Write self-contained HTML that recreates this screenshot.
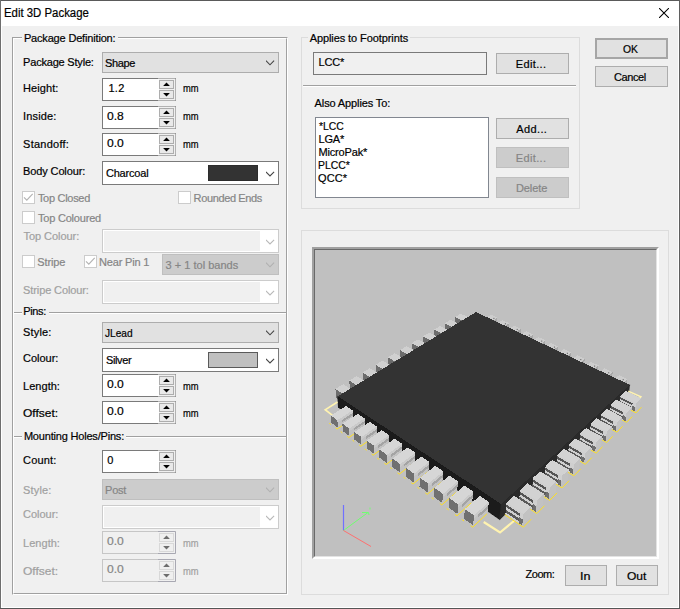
<!DOCTYPE html>
<html>
<head>
<meta charset="utf-8">
<title>Edit 3D Package</title>
<style>
html,body{margin:0;padding:0;}
body{width:680px;height:609px;overflow:hidden;background:#f0f0f0;font-family:"Liberation Sans",sans-serif;font-size:11px;color:#000;position:relative;}
.a{position:absolute;}
#bt{left:0;top:0;width:680px;height:1px;background:#5a5a5a;}
#bl{left:0;top:0;width:1px;height:609px;background:#6e6e6e;}
#br{left:678px;top:1px;width:1px;height:607px;background:#fff;}
#br2{left:679px;top:0;width:1px;height:609px;background:#5f5f5f;}
#bb{left:1px;top:607px;width:678px;height:1px;background:#fff;}
#bb2{left:0;top:608px;width:680px;height:1px;background:#555;}
#title{left:1px;top:1px;width:678px;height:25px;background:#fff;}
.t{position:absolute;white-space:nowrap;line-height:13px;height:13px;font-size:11px;-webkit-text-stroke:0.2px currentColor;}
.d{color:#858585;}
.dl{color:#a0a0a0;}
.e{position:absolute;box-sizing:border-box;border-top:1px solid #a0a0a0;border-left:1px solid #a0a0a0;border-right:1px solid #fff;border-bottom:1px solid #fff;}
.e i{position:absolute;left:0;top:0;right:0;bottom:0;border-top:1px solid #fff;border-left:1px solid #fff;border-right:1px solid #a0a0a0;border-bottom:1px solid #a0a0a0;}
.hl{position:absolute;height:1px;background:#a0a0a0;border-bottom:1px solid #fff;}
.gb{position:absolute;border:1px solid #dcdcdc;box-sizing:border-box;}
.gl{position:absolute;background:#f0f0f0;white-space:nowrap;line-height:13px;height:13px;}
.gl .t{position:relative;display:inline-block;}
.cb{position:absolute;box-sizing:border-box;border:1px solid #adadad;background:#e1e1e1;height:21px;}
.cb.w{background:#fff;border-color:#7a7a7a;}
.cb.dis{background:#cccccc;border-color:#bfbfbf;}
.cb.wd{background:#fff;border-color:#cccccc;}
.cb.wd b{position:absolute;left:1px;top:1px;width:156px;height:20px;background:#f0f0f0;}
.cb svg{position:absolute;}
.sp{position:absolute;box-sizing:border-box;border:1px solid #7a7a7a;border-right-color:#b2b2b2;background:#fff;width:74px;height:23px;}
.sp u{position:absolute;left:55px;top:-1px;width:17px;height:21px;border-top:1px solid #b2b2b2;border-bottom:1px solid #b2b2b2;background:#f0f0f0;box-shadow:inset 1px 0 0 #fff;}
.sp.dis{border-color:#c6c6c6;border-right-color:#a8a8b2;background:#f0f0f0;}
.sp.dis u{border-color:#a8a8b2;box-shadow:none;}
.sb{position:absolute;box-sizing:border-box;border:1px solid #adadad;background:#e9e9e9;width:15px;height:9px;left:56px;}
.sb svg{position:absolute;left:0;top:0;}
.sp.dis .sb{border-color:#d8d8d8;background:#efefef;}
.btn{position:absolute;box-sizing:border-box;border:1px solid #adadad;background:#e1e1e1;height:21px;}
.btn.dis{background:#cccccc;border-color:#bfbfbf;}
.btn.def{border:2px solid #a6a6a6;}
.ck{position:absolute;box-sizing:border-box;border:1px solid #cccccc;background:#fff;width:13px;height:13px;}
.ck.off{background:#f4f4f4;}
</style>
</head>
<body>
<div class="a" id="bt"></div><div class="a" id="bl"></div><div class="a" style="left:1px;top:1px;width:1px;height:606px;background:#fff"></div><div class="a" id="br"></div><div class="a" id="br2"></div><div class="a" id="bb"></div><div class="a" id="bb2"></div>
<div class="a" id="title"></div>
<div class="t" style="left:4.1px;top:7.2px;transform:scaleX(0.926);transform-origin:0 0;font-size:12.3px">Edit 3D Package</div>
<svg class="a" style="left:659px;top:8px" width="10" height="10" viewBox="0 0 10 10"><path d="M0 0L10 10M10 0L0 10" stroke="#000" stroke-width="1.05" fill="none"/></svg>
<div class="e" style="left:12px;top:37px;width:276px;height:558px"><i></i></div>
<div class="hl" style="left:14px;top:312px;width:272px"></div>
<div class="hl" style="left:14px;top:436px;width:272px"></div>
<div class="gl" style="left:22px;top:31px;width:96px"></div>
<div class="gl" style="left:22px;top:305px;width:27px"></div>
<div class="gl" style="left:22px;top:430px;width:104px"></div>
<div class="t" style="left:23.9px;top:31.7px;letter-spacing:-0.17px">Package Definition:</div>
<div class="t" style="left:23.3px;top:304.7px;letter-spacing:-0.37px">Pins:</div>
<div class="t" style="left:23.9px;top:429.7px;letter-spacing:-0.19px">Mounting Holes/Pins:</div>
<div class="t" style="left:23.1px;top:55.7px;letter-spacing:-0.20px">Package Style:</div>
<div class="cb " style="left:102px;top:52px;width:177px;height:21px"><svg style="right:3px;top:7px" width="9" height="6" viewBox="0 0 9 6"><path d="M-0.1 0.65L4 4.8L8.1 0.65" stroke="#444" stroke-width="1.1" fill="none"/></svg></div>

<div class="t" style="left:105.1px;top:56.7px;letter-spacing:-0.40px">Shape</div>
<div class="t" style="left:23.1px;top:81.7px;letter-spacing:0.06px">Height:</div>
<div class="sp" style="left:102px;top:78px"><u></u><div class="sb" style="top:1px"><svg width="13" height="7" viewBox="0 0 13 7"><polygon points="3.1,5 6.5,1.5 9.9,5" fill="#000"/></svg></div><div class="sb" style="top:11px"><svg width="13" height="7" viewBox="0 0 13 7"><polygon points="3.1,2 9.9,2 6.5,5.5" fill="#000"/></svg></div></div>

<div class="t" style="left:108.5px;top:81.7px;letter-spacing:0.25px">1.2</div>
<div class="t" style="left:182.6px;top:81.7px;transform:scaleX(0.851);transform-origin:0 0">mm</div>
<div class="t" style="left:23.1px;top:109.7px;letter-spacing:0.13px">Inside:</div>
<div class="sp" style="left:102px;top:106px"><u></u><div class="sb" style="top:1px"><svg width="13" height="7" viewBox="0 0 13 7"><polygon points="3.1,5 6.5,1.5 9.9,5" fill="#000"/></svg></div><div class="sb" style="top:11px"><svg width="13" height="7" viewBox="0 0 13 7"><polygon points="3.1,2 9.9,2 6.5,5.5" fill="#000"/></svg></div></div>

<div class="t" style="left:107.1px;top:109.7px;transform:scaleX(1.098);transform-origin:0 0">0.8</div>
<div class="t" style="left:182.6px;top:109.7px;transform:scaleX(0.851);transform-origin:0 0">mm</div>
<div class="t" style="left:23.1px;top:137.7px;letter-spacing:0.24px">Standoff:</div>
<div class="sp" style="left:102px;top:133px"><u></u><div class="sb" style="top:1px"><svg width="13" height="7" viewBox="0 0 13 7"><polygon points="3.1,5 6.5,1.5 9.9,5" fill="#000"/></svg></div><div class="sb" style="top:11px"><svg width="13" height="7" viewBox="0 0 13 7"><polygon points="3.1,2 9.9,2 6.5,5.5" fill="#000"/></svg></div></div>

<div class="t" style="left:107.1px;top:136.7px;transform:scaleX(1.098);transform-origin:0 0">0.0</div>
<div class="t" style="left:182.6px;top:137.7px;transform:scaleX(0.851);transform-origin:0 0">mm</div>
<div class="t" style="left:23.1px;top:164.7px;letter-spacing:-0.13px">Body Colour:</div>
<div class="cb w" style="left:102px;top:161px;width:177px;height:24px"><div class="a" style="left:105px;top:3px;width:50px;height:16px;background:#333;box-shadow:inset 0 0 0 1px #2c2c2c"></div><svg style="right:3px;top:9px" width="9" height="6" viewBox="0 0 9 6"><path d="M-0.1 0.8L4 4.9L8.1 0.8" stroke="#444" stroke-width="1.1" fill="none"/></svg></div>

<div class="t" style="left:105.9px;top:166.7px;letter-spacing:-0.18px">Charcoal</div>
<div class="ck " style="left:22px;top:191px"><svg class="a" style="left:0;top:0" width="11" height="11" viewBox="0 0 11 11"><path d="M1 5.3L3.8 8.1L9.7 1.9" stroke="#b4b4b4" stroke-width="1.2" fill="none"/></svg></div>

<div class="t d" style="left:37.9px;top:191.7px;letter-spacing:-0.29px">Top Closed</div>
<div class="ck " style="left:178px;top:191px"></div>

<div class="t d" style="left:193.6px;top:191.7px;letter-spacing:-0.37px">Rounded Ends</div>
<div class="ck " style="left:22px;top:211px"></div>

<div class="t d" style="left:37.9px;top:211.7px;letter-spacing:-0.19px">Top Coloured</div>
<div class="t dl" style="left:23.5px;top:229.7px;letter-spacing:-0.05px">Top Colour:</div>
<div class="cb wd" style="left:102px;top:229px;width:177px;height:24px"><b></b><svg style="right:3px;top:9px" width="9" height="6" viewBox="0 0 9 6"><path d="M-0.1 0.8L4 4.9L8.1 0.8" stroke="#b8b8b8" stroke-width="1.1" fill="none"/></svg></div>

<div class="ck " style="left:22px;top:255px"></div>

<div class="t d" style="left:37.3px;top:255.7px;letter-spacing:-0.15px">Stripe</div>
<div class="ck " style="left:84px;top:255px"><svg class="a" style="left:0;top:0" width="11" height="11" viewBox="0 0 11 11"><path d="M1 5.3L3.8 8.1L9.7 1.9" stroke="#b4b4b4" stroke-width="1.2" fill="none"/></svg></div>

<div class="t d" style="left:99.1px;top:255.7px;letter-spacing:-0.19px">Near Pin 1</div>
<div class="cb dis" style="left:162px;top:254px;width:117px;height:21px"><svg style="right:3px;top:7px" width="9" height="6" viewBox="0 0 9 6"><path d="M-0.1 0.65L4 4.8L8.1 0.65" stroke="#b0b0b0" stroke-width="1.1" fill="none"/></svg></div>

<div class="t d" style="left:165.5px;top:258.7px;letter-spacing:0.02px">3 + 1 tol bands</div>
<div class="t dl" style="left:23.1px;top:283.7px;letter-spacing:-0.11px">Stripe Colour:</div>
<div class="cb wd" style="left:102px;top:280px;width:177px;height:24px"><b></b><svg style="right:3px;top:9px" width="9" height="6" viewBox="0 0 9 6"><path d="M-0.1 0.8L4 4.9L8.1 0.8" stroke="#b8b8b8" stroke-width="1.1" fill="none"/></svg></div>

<div class="t" style="left:23.1px;top:325.7px;letter-spacing:0.14px">Style:</div>
<div class="cb " style="left:102px;top:322px;width:177px;height:21px"><svg style="right:3px;top:7px" width="9" height="6" viewBox="0 0 9 6"><path d="M-0.1 0.65L4 4.8L8.1 0.65" stroke="#444" stroke-width="1.1" fill="none"/></svg></div>

<div class="t" style="left:105.1px;top:326.7px;transform:scaleX(0.920);transform-origin:0 0">JLead</div>
<div class="t" style="left:23.1px;top:351.7px;letter-spacing:-0.04px">Colour:</div>
<div class="cb w" style="left:102px;top:348px;width:177px;height:24px"><div class="a" style="left:105px;top:3px;width:48px;height:14px;background:#c0c0c0;border:1px solid #5a5a5a"></div><svg style="right:3px;top:9px" width="9" height="6" viewBox="0 0 9 6"><path d="M-0.1 0.8L4 4.9L8.1 0.8" stroke="#444" stroke-width="1.1" fill="none"/></svg></div>

<div class="t" style="left:105.9px;top:353.7px;letter-spacing:-0.34px">Silver</div>
<div class="t" style="left:23.1px;top:379.7px;letter-spacing:0.02px">Length:</div>
<div class="sp" style="left:102px;top:374px"><u></u><div class="sb" style="top:1px"><svg width="13" height="7" viewBox="0 0 13 7"><polygon points="3.1,5 6.5,1.5 9.9,5" fill="#000"/></svg></div><div class="sb" style="top:11px"><svg width="13" height="7" viewBox="0 0 13 7"><polygon points="3.1,2 9.9,2 6.5,5.5" fill="#000"/></svg></div></div>

<div class="t" style="left:107.1px;top:377.7px;transform:scaleX(1.098);transform-origin:0 0">0.0</div>
<div class="t" style="left:182.6px;top:379.7px;transform:scaleX(0.851);transform-origin:0 0">mm</div>
<div class="t" style="left:23.1px;top:406.7px;transform:scaleX(1.093);transform-origin:0 0">Offset:</div>
<div class="sp" style="left:102px;top:401px"><u></u><div class="sb" style="top:1px"><svg width="13" height="7" viewBox="0 0 13 7"><polygon points="3.1,5 6.5,1.5 9.9,5" fill="#000"/></svg></div><div class="sb" style="top:11px"><svg width="13" height="7" viewBox="0 0 13 7"><polygon points="3.1,2 9.9,2 6.5,5.5" fill="#000"/></svg></div></div>

<div class="t" style="left:107.1px;top:404.7px;transform:scaleX(1.098);transform-origin:0 0">0.0</div>
<div class="t" style="left:182.6px;top:406.7px;transform:scaleX(0.851);transform-origin:0 0">mm</div>
<div class="t" style="left:23.1px;top:453.7px;letter-spacing:0.16px">Count:</div>
<div class="sp" style="left:102px;top:450px"><u></u><div class="sb" style="top:1px"><svg width="13" height="7" viewBox="0 0 13 7"><polygon points="3.1,5 6.5,1.5 9.9,5" fill="#000"/></svg></div><div class="sb" style="top:11px"><svg width="13" height="7" viewBox="0 0 13 7"><polygon points="3.1,2 9.9,2 6.5,5.5" fill="#000"/></svg></div></div>

<div class="t" style="left:107.3px;top:453.7px;letter-spacing:0.00px">0</div>
<div class="t dl" style="left:23.1px;top:483.7px;letter-spacing:0.14px">Style:</div>
<div class="cb dis" style="left:102px;top:479px;width:177px;height:21px"><svg style="right:3px;top:7px" width="9" height="6" viewBox="0 0 9 6"><path d="M-0.1 0.65L4 4.8L8.1 0.65" stroke="#b0b0b0" stroke-width="1.1" fill="none"/></svg></div>

<div class="t d" style="left:105.1px;top:483.7px;letter-spacing:-0.27px">Post</div>
<div class="t dl" style="left:23.1px;top:507.7px;letter-spacing:-0.04px">Colour:</div>
<div class="cb wd" style="left:102px;top:505px;width:177px;height:24px"><b></b><svg style="right:3px;top:9px" width="9" height="6" viewBox="0 0 9 6"><path d="M-0.1 0.8L4 4.9L8.1 0.8" stroke="#b8b8b8" stroke-width="1.1" fill="none"/></svg></div>

<div class="t dl" style="left:23.1px;top:536.7px;letter-spacing:0.02px">Length:</div>
<div class="sp dis" style="left:102px;top:531px"><u></u><div class="sb" style="top:1px"><svg width="13" height="7" viewBox="0 0 13 7"><polygon points="3.1,5 6.5,1.5 9.9,5" fill="#6d6d6d"/></svg></div><div class="sb" style="top:11px"><svg width="13" height="7" viewBox="0 0 13 7"><polygon points="3.1,2 9.9,2 6.5,5.5" fill="#6d6d6d"/></svg></div></div>

<div class="t d" style="left:107.1px;top:534.7px;transform:scaleX(1.098);transform-origin:0 0">0.0</div>
<div class="t dl" style="left:182.6px;top:536.7px;transform:scaleX(0.851);transform-origin:0 0">mm</div>
<div class="t dl" style="left:23.1px;top:564.7px;transform:scaleX(1.093);transform-origin:0 0">Offset:</div>
<div class="sp dis" style="left:102px;top:559px"><u></u><div class="sb" style="top:1px"><svg width="13" height="7" viewBox="0 0 13 7"><polygon points="3.1,5 6.5,1.5 9.9,5" fill="#6d6d6d"/></svg></div><div class="sb" style="top:11px"><svg width="13" height="7" viewBox="0 0 13 7"><polygon points="3.1,2 9.9,2 6.5,5.5" fill="#6d6d6d"/></svg></div></div>

<div class="t d" style="left:107.1px;top:562.7px;transform:scaleX(1.098);transform-origin:0 0">0.0</div>
<div class="t dl" style="left:182.6px;top:564.7px;transform:scaleX(0.851);transform-origin:0 0">mm</div>
<div class="gb" style="left:301px;top:37px;width:279px;height:172px"></div>
<div class="gl" style="left:308px;top:31px;width:102px"></div>
<div class="t" style="left:309.7px;top:31.7px;letter-spacing:-0.09px">Applies to Footprints</div>
<div class="a" style="left:313px;top:52px;width:174px;height:23px;box-sizing:border-box;border:1px solid #7a7a7a;background:#f0f0f0"></div>
<div class="t" style="left:318.4px;top:55.7px;letter-spacing:-0.10px">LCC*</div>
<div class="btn " style="left:496px;top:53px;width:73px"></div>

<div class="t" style="left:515.8px;top:57.7px;letter-spacing:0.36px">Edit...</div>
<div class="hl" style="left:303px;top:85px;width:273px"></div>
<div class="t" style="left:314.6px;top:96.7px;letter-spacing:-0.12px">Also Applies To:</div>
<div class="a" style="left:315px;top:117px;width:174px;height:81px;box-sizing:border-box;border:1px solid #828790;background:#fff"></div>
<div class="t" style="left:318.5px;top:119.7px;transform:scaleX(0.943);transform-origin:0 0">*LCC</div>
<div class="t" style="left:318.4px;top:132.7px;letter-spacing:-0.10px">LGA*</div>
<div class="t" style="left:318.4px;top:145.7px;letter-spacing:-0.14px">MicroPak*</div>
<div class="t" style="left:318.4px;top:158.7px;transform:scaleX(0.946);transform-origin:0 0">PLCC*</div>
<div class="t" style="left:318.1px;top:171.7px;letter-spacing:0.09px">QCC*</div>
<div class="btn " style="left:496px;top:118px;width:73px"></div>

<div class="t" style="left:516.3px;top:122.7px;letter-spacing:0.37px">Add...</div>
<div class="btn dis" style="left:496px;top:147px;width:73px"></div>

<div class="t d" style="left:515.8px;top:151.7px;letter-spacing:0.36px">Edit...</div>
<div class="btn dis" style="left:496px;top:177px;width:73px"></div>

<div class="t d" style="left:515.9px;top:181.7px;letter-spacing:-0.08px">Delete</div>
<div class="btn def" style="left:595px;top:38px;width:73px"></div>

<div class="t" style="left:622.9px;top:42.7px;transform:scaleX(0.943);transform-origin:0 0">OK</div>
<div class="btn " style="left:595px;top:66px;width:73px"></div>

<div class="t" style="left:614.0px;top:70.7px;letter-spacing:-0.39px">Cancel</div>
<div class="gb" style="left:301px;top:230px;width:368px;height:365px"></div>
<div class="a" style="left:312px;top:247px;width:347px;height:312px;box-sizing:border-box;border:2px solid #a0a0a0;border-right-color:#fff;border-bottom-color:#fff;background:#696969"><div class="a" style="left:0;top:0;right:0;bottom:0;border:1px solid #696969;border-right-color:#e3e3e3;border-bottom-color:#e3e3e3;background:#c0c0c0"></div></div>
<svg class="a" style="left:315px;top:250px" width="341" height="306" viewBox="315 250 341 306" shape-rendering="auto">
<polygon shape-rendering="crispEdges" points="466.0,329.8 471.6,326.3 471.6,318.9 465.9,322.4" fill="#b0b0b0"/>
<polygon shape-rendering="crispEdges" points="455.3,324.4 466.0,329.8 465.9,322.4 455.1,317.1" fill="#6c6c6c"/>
<polygon shape-rendering="crispEdges" points="455.1,317.1 465.9,322.4 471.6,318.9 460.8,313.7" fill="#d0d0d0"/>
<polygon shape-rendering="crispEdges" points="455.7,336.4 461.5,332.7 461.4,325.2 455.6,328.8" fill="#b0b0b0"/>
<polygon shape-rendering="crispEdges" points="445.0,330.8 455.7,336.4 455.6,328.8 444.7,323.3" fill="#6c6c6c"/>
<polygon shape-rendering="crispEdges" points="444.7,323.3 455.6,328.8 461.4,325.2 450.6,319.8" fill="#d0d0d0"/>
<polygon shape-rendering="crispEdges" points="445.1,343.1 451.1,339.3 451.0,331.6 445.0,335.3" fill="#b0b0b0"/>
<polygon shape-rendering="crispEdges" points="434.4,337.4 445.1,343.1 445.0,335.3 434.1,329.7" fill="#6c6c6c"/>
<polygon shape-rendering="crispEdges" points="434.1,329.7 445.0,335.3 451.0,331.6 440.1,326.1" fill="#d0d0d0"/>
<polygon shape-rendering="crispEdges" points="434.2,350.1 440.4,346.1 440.2,338.3 434.0,342.1" fill="#b0b0b0"/>
<polygon shape-rendering="crispEdges" points="423.5,344.2 434.2,350.1 434.0,342.1 423.1,336.3" fill="#6c6c6c"/>
<polygon shape-rendering="crispEdges" points="423.1,336.3 434.0,342.1 440.2,338.3 429.3,332.6" fill="#d0d0d0"/>
<polygon shape-rendering="crispEdges" points="423.0,357.2 429.3,353.2 429.1,345.1 422.7,349.1" fill="#b0b0b0"/>
<polygon shape-rendering="crispEdges" points="412.2,351.1 423.0,357.2 422.7,349.1 411.7,343.1" fill="#6c6c6c"/>
<polygon shape-rendering="crispEdges" points="411.7,343.1 422.7,349.1 429.1,345.1 418.1,339.3" fill="#d0d0d0"/>
<polygon shape-rendering="crispEdges" points="411.3,364.6 417.9,360.5 417.6,352.2 411.0,356.3" fill="#b0b0b0"/>
<polygon shape-rendering="crispEdges" points="400.5,358.4 411.3,364.6 411.0,356.3 400.0,350.1" fill="#6c6c6c"/>
<polygon shape-rendering="crispEdges" points="400.0,350.1 411.0,356.3 417.6,352.2 406.6,346.2" fill="#d0d0d0"/>
<polygon shape-rendering="crispEdges" points="399.3,372.3 406.1,368.0 405.7,359.5 398.9,363.7" fill="#b0b0b0"/>
<polygon shape-rendering="crispEdges" points="388.5,365.8 399.3,372.3 398.9,363.7 387.9,357.4" fill="#6c6c6c"/>
<polygon shape-rendering="crispEdges" points="387.9,357.4 398.9,363.7 405.7,359.5 394.8,353.3" fill="#d0d0d0"/>
<polygon shape-rendering="crispEdges" points="386.9,380.2 394.0,375.7 393.5,367.1 386.5,371.4" fill="#b0b0b0"/>
<polygon shape-rendering="crispEdges" points="376.1,373.5 386.9,380.2 386.5,371.4 375.5,364.9" fill="#6c6c6c"/>
<polygon shape-rendering="crispEdges" points="375.5,364.9 386.5,371.4 393.5,367.1 382.5,360.6" fill="#d0d0d0"/>
<polygon shape-rendering="crispEdges" points="374.1,388.4 381.4,383.7 380.9,374.9 373.6,379.4" fill="#b0b0b0"/>
<polygon shape-rendering="crispEdges" points="363.3,381.4 374.1,388.4 373.6,379.4 362.6,372.6" fill="#6c6c6c"/>
<polygon shape-rendering="crispEdges" points="362.6,372.6 373.6,379.4 380.9,374.9 369.9,368.2" fill="#d0d0d0"/>
<polygon shape-rendering="crispEdges" points="360.8,396.8 368.3,392.0 367.8,383.0 360.3,387.6" fill="#b0b0b0"/>
<polygon shape-rendering="crispEdges" points="350.0,389.7 360.8,396.8 360.3,387.6 349.2,380.6" fill="#6c6c6c"/>
<polygon shape-rendering="crispEdges" points="349.2,380.6 360.3,387.6 367.8,383.0 356.8,376.1" fill="#d0d0d0"/>
<polygon shape-rendering="crispEdges" points="347.1,405.6 354.9,400.6 354.3,391.3 346.5,396.1" fill="#b0b0b0"/>
<polygon shape-rendering="crispEdges" points="336.3,398.2 347.1,405.6 346.5,396.1 335.4,388.9" fill="#6c6c6c"/>
<polygon shape-rendering="crispEdges" points="335.4,388.9 346.5,396.1 354.3,391.3 343.2,384.2" fill="#d0d0d0"/>
<polygon shape-rendering="crispEdges" points="488.1,329.1 497.4,323.0 497.5,317.7 488.3,323.7" fill="#a8a8a8"/>
<polygon shape-rendering="crispEdges" points="481.7,325.9 488.1,329.1 488.3,323.7 481.8,320.6" fill="#8a8a8a"/>
<polygon shape-rendering="crispEdges" points="481.8,320.6 488.3,323.7 497.5,317.7 491.1,314.7" fill="#cdcdcd"/>
<rect x="493.4" y="317.9" width="1" height="1" fill="#555"/>
<polygon shape-rendering="crispEdges" points="499.6,334.8 508.8,328.5 509.1,323.2 499.9,329.3" fill="#a8a8a8"/>
<polygon shape-rendering="crispEdges" points="493.1,331.5 499.6,334.8 499.9,329.3 493.2,326.1" fill="#8a8a8a"/>
<polygon shape-rendering="crispEdges" points="493.2,326.1 499.9,329.3 509.1,323.2 502.5,320.1" fill="#cdcdcd"/>
<rect x="504.9" y="323.3" width="1" height="1" fill="#555"/>
<polygon shape-rendering="crispEdges" points="511.4,340.6 520.6,334.2 520.9,328.8 511.8,335.0" fill="#a8a8a8"/>
<polygon shape-rendering="crispEdges" points="504.7,337.3 511.4,340.6 511.8,335.0 505.0,331.8" fill="#8a8a8a"/>
<polygon shape-rendering="crispEdges" points="505.0,331.8 511.8,335.0 520.9,328.8 514.2,325.6" fill="#cdcdcd"/>
<rect x="516.7" y="328.9" width="1" height="1" fill="#555"/>
<polygon shape-rendering="crispEdges" points="523.6,346.6 532.6,340.0 533.1,334.5 524.0,340.9" fill="#a8a8a8"/>
<polygon shape-rendering="crispEdges" points="516.6,343.2 523.6,346.6 524.0,340.9 517.0,337.6" fill="#8a8a8a"/>
<polygon shape-rendering="crispEdges" points="517.0,337.6 524.0,340.9 533.1,334.5 526.1,331.2" fill="#cdcdcd"/>
<rect x="528.8" y="334.7" width="1" height="1" fill="#555"/>
<polygon shape-rendering="crispEdges" points="536.0,352.7 545.0,346.0 545.5,340.4 536.5,347.0" fill="#a8a8a8"/>
<polygon shape-rendering="crispEdges" points="528.9,349.2 536.0,352.7 536.5,347.0 529.4,343.5" fill="#8a8a8a"/>
<polygon shape-rendering="crispEdges" points="529.4,343.5 536.5,347.0 545.5,340.4 538.4,337.0" fill="#cdcdcd"/>
<rect x="541.2" y="340.6" width="1" height="1" fill="#555"/>
<polygon shape-rendering="crispEdges" points="548.7,359.0 557.7,352.1 558.3,346.4 549.3,353.2" fill="#a8a8a8"/>
<polygon shape-rendering="crispEdges" points="541.5,355.4 548.7,359.0 549.3,353.2 542.0,349.6" fill="#8a8a8a"/>
<polygon shape-rendering="crispEdges" points="542.0,349.6 549.3,353.2 558.3,346.4 551.0,343.0" fill="#cdcdcd"/>
<rect x="553.9" y="346.6" width="1" height="1" fill="#555"/>
<polygon shape-rendering="crispEdges" points="561.8,365.5 570.7,358.4 571.4,352.6 562.5,359.6" fill="#a8a8a8"/>
<polygon shape-rendering="crispEdges" points="554.4,361.8 561.8,365.5 562.5,359.6 555.0,355.9" fill="#8a8a8a"/>
<polygon shape-rendering="crispEdges" points="555.0,355.9 562.5,359.6 571.4,352.6 563.9,349.1" fill="#cdcdcd"/>
<rect x="566.9" y="352.8" width="1" height="1" fill="#555"/>
<polygon shape-rendering="crispEdges" points="575.3,372.2 584.0,364.9 584.8,358.9 576.1,366.1" fill="#a8a8a8"/>
<polygon shape-rendering="crispEdges" points="567.6,368.4 575.3,372.2 576.1,366.1 568.3,362.4" fill="#8a8a8a"/>
<polygon shape-rendering="crispEdges" points="568.3,362.4 576.1,366.1 584.8,358.9 577.1,355.3" fill="#cdcdcd"/>
<rect x="580.3" y="359.1" width="1" height="1" fill="#555"/>
<polygon shape-rendering="crispEdges" points="589.1,379.0 597.8,371.5 598.6,365.5 590.0,372.8" fill="#a8a8a8"/>
<polygon shape-rendering="crispEdges" points="581.2,375.1 589.1,379.0 590.0,372.8 582.0,369.0" fill="#8a8a8a"/>
<polygon shape-rendering="crispEdges" points="582.0,369.0 590.0,372.8 598.6,365.5 590.7,361.7" fill="#cdcdcd"/>
<rect x="594.1" y="365.6" width="1" height="1" fill="#555"/>
<polygon shape-rendering="crispEdges" points="603.4,386.0 611.9,378.3 612.8,372.2 604.2,379.7" fill="#a8a8a8"/>
<polygon shape-rendering="crispEdges" points="595.2,382.0 603.4,386.0 604.2,379.7 596.1,375.8" fill="#8a8a8a"/>
<polygon shape-rendering="crispEdges" points="596.1,375.8 604.2,379.7 612.8,372.2 604.7,368.3" fill="#cdcdcd"/>
<rect x="608.2" y="372.3" width="1" height="1" fill="#555"/>
<polygon shape-rendering="crispEdges" points="618.0,393.3 626.4,385.3 627.3,379.0 618.9,386.8" fill="#a8a8a8"/>
<polygon shape-rendering="crispEdges" points="609.6,389.1 618.0,393.3 618.9,386.8 610.5,382.7" fill="#8a8a8a"/>
<polygon shape-rendering="crispEdges" points="610.5,382.7 618.9,386.8 627.3,379.0 619.0,375.1" fill="#cdcdcd"/>
<rect x="622.7" y="379.2" width="1" height="1" fill="#555"/>
<polygon shape-rendering="crispEdges" points="338.5,407.5 499.7,519.5 501.2,504.0 337.7,396.3" fill="#1b1b1b" stroke="#1b1b1b" stroke-width="0.8" stroke-linejoin="round"/>
<polygon shape-rendering="crispEdges" points="499.7,519.5 628.2,395.3 629.7,384.8 501.2,504.0" fill="#2a2a2a" stroke="#2a2a2a" stroke-width="0.8" stroke-linejoin="round"/>
<polygon shape-rendering="crispEdges" points="337.7,396.3 501.2,504.0 629.7,384.8 476.0,312.0" fill="#333333"/>
<polyline points="337.5,402.0 325.2,409.7 332.5,415.3" fill="none" stroke="#fff3b0" stroke-width="1.6"/>
<polyline points="483.7,522.0 500.0,532.5 514.5,520.5" fill="none" stroke="#fff3b0" stroke-width="2.2"/>
<polyline points="628.2,391.2 641.0,396.8 636.5,401.7" fill="none" stroke="#fff3b0" stroke-width="1.4"/>
<polyline points="329.3,423.3 330.9,424.5" fill="none" stroke="#ffe020" stroke-width="1"/>
<polyline points="335.6,427.9 337.1,429.0 351.7,419.4" fill="none" stroke="#ffe020" stroke-width="1"/>
<polygon shape-rendering="crispEdges" points="337.8,427.6 353.0,417.6 352.7,410.4 337.4,420.2" fill="#c2c2c2"/>
<polygon shape-rendering="crispEdges" points="342.0,422.4 352.9,415.3 352.8,412.9 341.9,419.9" fill="#a4a4a4"/>
<polygon shape-rendering="crispEdges" points="337.6,422.7 352.8,412.9 352.7,410.4 337.4,420.2" fill="#cacaca"/>
<polygon shape-rendering="crispEdges" points="331.2,422.8 337.8,427.6 337.4,420.2 330.8,415.6" fill="#707070"/>
<polygon shape-rendering="crispEdges" points="330.8,415.6 337.4,420.2 352.7,410.4 346.0,406.0" fill="#d6d6d6"/>
<polyline points="340.7,431.6 342.4,432.8" fill="none" stroke="#ffe020" stroke-width="1"/>
<polyline points="347.2,436.3 348.8,437.5 363.4,427.5" fill="none" stroke="#ffe020" stroke-width="1"/>
<polygon shape-rendering="crispEdges" points="349.4,436.0 364.7,425.7 364.5,418.4 349.3,428.5" fill="#c2c2c2"/>
<polygon shape-rendering="crispEdges" points="353.7,430.7 364.6,423.3 364.6,420.9 353.6,428.1" fill="#a4a4a4"/>
<polygon shape-rendering="crispEdges" points="349.3,431.0 364.6,420.9 364.5,418.4 349.3,428.5" fill="#cacaca"/>
<polygon shape-rendering="crispEdges" points="342.7,431.1 349.4,436.0 349.3,428.5 342.4,423.7" fill="#707070"/>
<polygon shape-rendering="crispEdges" points="342.4,423.7 349.3,428.5 364.5,418.4 357.7,413.8" fill="#d6d6d6"/>
<polyline points="352.5,440.2 354.2,441.4" fill="none" stroke="#ffe020" stroke-width="1"/>
<polyline points="359.2,445.0 360.8,446.2 375.4,435.9" fill="none" stroke="#ffe020" stroke-width="1"/>
<polygon shape-rendering="crispEdges" points="361.5,444.7 376.7,434.0 376.7,426.6 361.4,437.0" fill="#c2c2c2"/>
<polygon shape-rendering="crispEdges" points="365.8,439.2 376.7,431.6 376.7,429.1 365.8,436.6" fill="#a4a4a4"/>
<polygon shape-rendering="crispEdges" points="361.4,439.6 376.7,429.1 376.7,426.6 361.4,437.0" fill="#cacaca"/>
<polygon shape-rendering="crispEdges" points="354.5,439.6 361.5,444.7 361.4,437.0 354.4,432.0" fill="#707070"/>
<polygon shape-rendering="crispEdges" points="354.4,432.0 361.4,437.0 376.7,426.6 369.6,421.8" fill="#d6d6d6"/>
<polyline points="364.7,449.0 366.5,450.3" fill="none" stroke="#ffe020" stroke-width="1"/>
<polyline points="371.6,454.0 373.2,455.2 387.8,444.6" fill="none" stroke="#ffe020" stroke-width="1"/>
<polygon shape-rendering="crispEdges" points="373.9,453.6 389.1,442.6 389.2,435.0 374.0,445.7" fill="#c2c2c2"/>
<polygon shape-rendering="crispEdges" points="378.2,448.0 389.1,440.2 389.2,437.6 378.3,445.3" fill="#a4a4a4"/>
<polygon shape-rendering="crispEdges" points="373.9,448.4 389.2,437.6 389.2,435.0 374.0,445.7" fill="#cacaca"/>
<polygon shape-rendering="crispEdges" points="366.7,448.4 373.9,453.6 374.0,445.7 366.7,440.6" fill="#707070"/>
<polygon shape-rendering="crispEdges" points="366.7,440.6 374.0,445.7 389.2,435.0 381.9,430.1" fill="#d6d6d6"/>
<polyline points="377.2,458.1 379.1,459.4" fill="none" stroke="#ffe020" stroke-width="1"/>
<polyline points="384.3,463.2 386.1,464.5 400.7,453.6" fill="none" stroke="#ffe020" stroke-width="1"/>
<polygon shape-rendering="crispEdges" points="386.7,462.9 401.9,451.5 402.1,443.7 386.9,454.8" fill="#c2c2c2"/>
<polygon shape-rendering="crispEdges" points="391.1,457.1 402.0,449.0 402.0,446.3 391.2,454.3" fill="#a4a4a4"/>
<polygon shape-rendering="crispEdges" points="386.8,457.5 402.0,446.3 402.1,443.7 386.9,454.8" fill="#cacaca"/>
<polygon shape-rendering="crispEdges" points="379.2,457.5 386.7,462.9 386.9,454.8 379.4,449.5" fill="#707070"/>
<polygon shape-rendering="crispEdges" points="379.4,449.5 386.9,454.8 402.1,443.7 394.6,438.6" fill="#d6d6d6"/>
<polyline points="390.2,467.5 392.1,468.8" fill="none" stroke="#ffe020" stroke-width="1"/>
<polyline points="397.5,472.8 399.3,474.1 413.9,462.8" fill="none" stroke="#ffe020" stroke-width="1"/>
<polygon shape-rendering="crispEdges" points="399.9,472.4 415.1,460.7 415.5,452.6 400.3,464.1" fill="#c2c2c2"/>
<polygon shape-rendering="crispEdges" points="404.3,466.4 415.2,458.1 415.3,455.4 404.5,463.6" fill="#a4a4a4"/>
<polygon shape-rendering="crispEdges" points="400.1,466.9 415.3,455.4 415.5,452.6 400.3,464.1" fill="#cacaca"/>
<polygon shape-rendering="crispEdges" points="392.2,466.9 399.9,472.4 400.3,464.1 392.5,458.7" fill="#707070"/>
<polygon shape-rendering="crispEdges" points="392.5,458.7 400.3,464.1 415.5,452.6 407.7,447.4" fill="#d6d6d6"/>
<polyline points="403.6,477.2 405.5,478.6" fill="none" stroke="#ffe020" stroke-width="1"/>
<polyline points="411.2,482.7 413.0,484.0 427.5,472.3" fill="none" stroke="#ffe020" stroke-width="1"/>
<polygon shape-rendering="crispEdges" points="413.5,482.3 428.7,470.2 429.2,461.9 414.1,473.7" fill="#c2c2c2"/>
<polygon shape-rendering="crispEdges" points="418.0,476.1 428.9,467.5 429.0,464.7 418.2,473.2" fill="#a4a4a4"/>
<polygon shape-rendering="crispEdges" points="413.9,476.6 429.0,464.7 429.2,461.9 414.1,473.7" fill="#cacaca"/>
<polygon shape-rendering="crispEdges" points="405.6,476.6 413.5,482.3 414.1,473.7 406.1,468.1" fill="#707070"/>
<polygon shape-rendering="crispEdges" points="406.1,468.1 414.1,473.7 429.2,461.9 421.2,456.5" fill="#d6d6d6"/>
<polyline points="417.4,487.2 419.4,488.7" fill="none" stroke="#ffe020" stroke-width="1"/>
<polyline points="425.3,492.9 427.2,494.3 441.6,482.2" fill="none" stroke="#ffe020" stroke-width="1"/>
<polygon shape-rendering="crispEdges" points="427.7,492.5 442.8,479.9 443.4,471.4 428.3,483.6" fill="#c2c2c2"/>
<polygon shape-rendering="crispEdges" points="432.2,486.1 443.0,477.2 443.2,474.3 432.4,483.1" fill="#a4a4a4"/>
<polygon shape-rendering="crispEdges" points="428.1,486.6 443.2,474.3 443.4,471.4 428.3,483.6" fill="#cacaca"/>
<polygon shape-rendering="crispEdges" points="419.5,486.6 427.7,492.5 428.3,483.6 420.0,477.9" fill="#707070"/>
<polygon shape-rendering="crispEdges" points="420.0,477.9 428.3,483.6 443.4,471.4 435.1,465.9" fill="#d6d6d6"/>
<polyline points="431.7,497.6 433.8,499.1" fill="none" stroke="#ffe020" stroke-width="1"/>
<polyline points="439.8,503.4 441.8,504.9 456.2,492.4" fill="none" stroke="#ffe020" stroke-width="1"/>
<polygon shape-rendering="crispEdges" points="442.3,503.0 457.3,490.1 458.0,481.2 443.0,493.9" fill="#c2c2c2"/>
<polygon shape-rendering="crispEdges" points="446.8,496.4 457.5,487.2 457.8,484.2 447.0,493.4" fill="#a4a4a4"/>
<polygon shape-rendering="crispEdges" points="442.8,497.0 457.8,484.2 458.0,481.2 443.0,493.9" fill="#cacaca"/>
<polygon shape-rendering="crispEdges" points="433.8,496.9 442.3,503.0 443.0,493.9 434.5,487.9" fill="#707070"/>
<polygon shape-rendering="crispEdges" points="434.5,487.9 443.0,493.9 458.0,481.2 449.5,475.5" fill="#d6d6d6"/>
<polyline points="446.5,508.3 448.7,509.9" fill="none" stroke="#ffe020" stroke-width="1"/>
<polyline points="454.9,514.4 457.0,515.8 471.3,502.9" fill="none" stroke="#ffe020" stroke-width="1"/>
<polygon shape-rendering="crispEdges" points="457.4,513.9 472.4,500.5 473.2,491.4 458.2,504.5" fill="#c2c2c2"/>
<polygon shape-rendering="crispEdges" points="461.9,507.1 472.6,497.6 472.9,494.5 462.2,504.0" fill="#a4a4a4"/>
<polygon shape-rendering="crispEdges" points="458.0,507.7 472.9,494.5 473.2,491.4 458.2,504.5" fill="#cacaca"/>
<polygon shape-rendering="crispEdges" points="448.6,507.6 457.4,513.9 458.2,504.5 449.4,498.3" fill="#707070"/>
<polygon shape-rendering="crispEdges" points="449.4,498.3 458.2,504.5 473.2,491.4 464.4,485.5" fill="#d6d6d6"/>
<polyline points="461.8,519.4 464.1,521.0" fill="none" stroke="#ffe020" stroke-width="1"/>
<polyline points="470.6,525.7 472.7,527.2 486.9,513.8" fill="none" stroke="#ffe020" stroke-width="1"/>
<polygon shape-rendering="crispEdges" points="473.1,525.3 487.9,511.3 488.8,501.9 474.0,515.5" fill="#c2c2c2"/>
<polygon shape-rendering="crispEdges" points="477.6,518.2 488.2,508.3 488.5,505.1 477.9,514.9" fill="#a4a4a4"/>
<polygon shape-rendering="crispEdges" points="473.7,518.8 488.5,505.1 488.8,501.9 474.0,515.5" fill="#cacaca"/>
<polygon shape-rendering="crispEdges" points="464.0,518.7 473.1,525.3 474.0,515.5 464.8,509.1" fill="#707070"/>
<polygon shape-rendering="crispEdges" points="464.8,509.1 474.0,515.5 488.8,501.9 479.7,495.8" fill="#d6d6d6"/>
<polyline points="619.0,404.2 636.0,412.8 641.4,407.3" fill="none" stroke="#ffe020" stroke-width="1"/>
<polygon shape-rendering="crispEdges" points="634.9,411.6 639.9,406.6 641.0,398.5 636.0,403.4" fill="#c2c2c2"/>
<polygon shape-rendering="crispEdges" points="619.4,403.8 634.9,411.6 636.0,403.4 620.5,395.8" fill="#cfcfcf"/>
<polygon shape-rendering="crispEdges" points="620.1,399.0 632.4,405.1 632.7,403.2 620.3,397.1" fill="#555555"/>
<polygon shape-rendering="crispEdges" points="619.6,402.7 631.9,408.9 632.2,406.9 619.8,400.7" fill="#5a5a5a"/>
<polygon shape-rendering="crispEdges" points="631.8,410.0 634.9,411.6 635.5,407.5 632.3,405.9" fill="#6e6e6e"/>
<polygon shape-rendering="crispEdges" points="620.5,395.8 636.0,403.4 641.0,398.5 625.6,391.0" fill="#d2d2d2"/>
<polyline points="609.5,413.4 626.6,422.3 632.2,416.6" fill="none" stroke="#ffe020" stroke-width="1"/>
<polygon shape-rendering="crispEdges" points="625.5,421.1 630.7,415.9 631.8,407.5 626.6,412.6" fill="#c2c2c2"/>
<polygon shape-rendering="crispEdges" points="609.9,413.0 625.5,421.1 626.6,412.6 611.0,404.7" fill="#cfcfcf"/>
<polygon shape-rendering="crispEdges" points="610.5,408.0 623.0,414.4 623.3,412.4 610.8,406.1" fill="#555555"/>
<polygon shape-rendering="crispEdges" points="610.0,411.8 622.5,418.3 622.8,416.2 610.3,409.9" fill="#5a5a5a"/>
<polygon shape-rendering="crispEdges" points="622.4,419.4 625.5,421.1 626.1,416.8 622.9,415.2" fill="#6e6e6e"/>
<polygon shape-rendering="crispEdges" points="611.0,404.7 626.6,412.6 631.8,407.5 616.2,399.8" fill="#d2d2d2"/>
<polyline points="599.6,423.0 616.9,432.2 622.6,426.3" fill="none" stroke="#ffe020" stroke-width="1"/>
<polygon shape-rendering="crispEdges" points="615.8,430.9 621.1,425.5 622.2,416.9 616.9,422.2" fill="#c2c2c2"/>
<polygon shape-rendering="crispEdges" points="600.0,422.5 615.8,430.9 616.9,422.2 601.1,414.0" fill="#cfcfcf"/>
<polygon shape-rendering="crispEdges" points="600.6,417.4 613.2,424.0 613.5,421.9 600.9,415.4" fill="#555555"/>
<polygon shape-rendering="crispEdges" points="600.2,421.3 612.7,428.0 613.0,425.9 600.4,419.3" fill="#5a5a5a"/>
<polygon shape-rendering="crispEdges" points="612.6,429.2 615.8,430.9 616.3,426.6 613.1,424.9" fill="#6e6e6e"/>
<polygon shape-rendering="crispEdges" points="601.1,414.0 616.9,422.2 622.2,416.9 606.5,408.9" fill="#d2d2d2"/>
<polyline points="589.3,432.9 606.7,442.5 612.8,436.3" fill="none" stroke="#ffe020" stroke-width="1"/>
<polygon shape-rendering="crispEdges" points="605.7,441.2 611.2,435.5 612.3,426.6 606.7,432.1" fill="#c2c2c2"/>
<polygon shape-rendering="crispEdges" points="589.8,432.4 605.7,441.2 606.7,432.1 590.8,423.6" fill="#cfcfcf"/>
<polygon shape-rendering="crispEdges" points="590.4,427.2 603.1,434.0 603.3,431.8 590.6,425.1" fill="#555555"/>
<polygon shape-rendering="crispEdges" points="589.9,431.2 602.6,438.1 602.9,436.0 590.2,429.1" fill="#5a5a5a"/>
<polygon shape-rendering="crispEdges" points="602.5,439.4 605.7,441.2 606.2,436.6 603.0,434.9" fill="#6e6e6e"/>
<polygon shape-rendering="crispEdges" points="590.8,423.6 606.7,432.1 612.3,426.6 596.4,418.4" fill="#d2d2d2"/>
<polyline points="578.6,443.2 596.2,453.1 602.5,446.8" fill="none" stroke="#ffe020" stroke-width="1"/>
<polygon shape-rendering="crispEdges" points="595.2,451.8 601.0,445.9 602.0,436.7 596.2,442.4" fill="#c2c2c2"/>
<polygon shape-rendering="crispEdges" points="579.1,442.7 595.2,451.8 596.2,442.4 580.1,433.6" fill="#cfcfcf"/>
<polygon shape-rendering="crispEdges" points="579.7,437.3 592.5,444.4 592.8,442.1 580.0,435.1" fill="#555555"/>
<polygon shape-rendering="crispEdges" points="579.3,441.5 592.1,448.6 592.3,446.4 579.5,439.3" fill="#5a5a5a"/>
<polygon shape-rendering="crispEdges" points="591.9,450.0 595.2,451.8 595.7,447.1 592.4,445.3" fill="#6e6e6e"/>
<polygon shape-rendering="crispEdges" points="580.1,433.6 596.2,442.4 602.0,436.7 586.0,428.1" fill="#d2d2d2"/>
<polyline points="567.5,453.9 585.3,464.3 591.8,457.6" fill="none" stroke="#ffe020" stroke-width="1"/>
<polygon shape-rendering="crispEdges" points="584.2,462.8 590.3,456.8 591.3,447.2 585.3,453.1" fill="#c2c2c2"/>
<polygon shape-rendering="crispEdges" points="568.0,453.4 584.2,462.8 585.3,453.1 569.1,444.0" fill="#cfcfcf"/>
<polygon shape-rendering="crispEdges" points="568.7,447.8 581.6,455.2 581.8,452.8 568.9,445.5" fill="#555555"/>
<polygon shape-rendering="crispEdges" points="568.2,452.1 581.1,459.6 581.4,457.3 568.4,449.9" fill="#5a5a5a"/>
<polygon shape-rendering="crispEdges" points="581.0,460.9 584.2,462.8 584.8,458.0 581.5,456.1" fill="#6e6e6e"/>
<polygon shape-rendering="crispEdges" points="569.1,444.0 585.3,453.1 591.3,447.2 575.1,438.3" fill="#d2d2d2"/>
<polyline points="556.0,465.1 573.9,475.8 580.7,468.9" fill="none" stroke="#ffe020" stroke-width="1"/>
<polygon shape-rendering="crispEdges" points="572.9,474.3 579.1,468.0 580.2,458.2 573.9,464.3" fill="#c2c2c2"/>
<polygon shape-rendering="crispEdges" points="556.5,464.6 572.9,474.3 573.9,464.3 557.5,454.8" fill="#cfcfcf"/>
<polygon shape-rendering="crispEdges" points="557.1,458.7 570.2,466.4 570.4,464.0 557.4,456.4" fill="#555555"/>
<polygon shape-rendering="crispEdges" points="556.7,463.2 569.7,471.0 570.0,468.6 556.9,460.9" fill="#5a5a5a"/>
<polygon shape-rendering="crispEdges" points="569.6,472.4 572.9,474.3 573.4,469.3 570.1,467.4" fill="#6e6e6e"/>
<polygon shape-rendering="crispEdges" points="557.5,454.8 573.9,464.3 580.2,458.2 563.9,448.9" fill="#d2d2d2"/>
<polyline points="544.0,476.7 562.0,487.9 569.1,480.7" fill="none" stroke="#ffe020" stroke-width="1"/>
<polygon shape-rendering="crispEdges" points="561.0,486.3 567.5,479.7 568.6,469.5 562.1,475.9" fill="#c2c2c2"/>
<polygon shape-rendering="crispEdges" points="544.5,476.2 561.0,486.3 562.1,475.9 545.6,466.1" fill="#cfcfcf"/>
<polygon shape-rendering="crispEdges" points="545.2,470.1 558.3,478.1 558.6,475.6 545.4,467.7" fill="#555555"/>
<polygon shape-rendering="crispEdges" points="544.7,474.7 557.8,482.8 558.1,480.3 544.9,472.3" fill="#5a5a5a"/>
<polygon shape-rendering="crispEdges" points="557.7,484.3 561.0,486.3 561.5,481.1 558.2,479.1" fill="#6e6e6e"/>
<polygon shape-rendering="crispEdges" points="545.6,466.1 562.1,475.9 568.6,469.5 552.2,459.9" fill="#d2d2d2"/>
<polyline points="531.5,488.8 549.7,500.4 557.0,492.9" fill="none" stroke="#ffe020" stroke-width="1"/>
<polygon shape-rendering="crispEdges" points="548.7,498.8 555.5,492.0 556.5,481.4 549.7,488.0" fill="#c2c2c2"/>
<polygon shape-rendering="crispEdges" points="532.1,488.2 548.7,498.8 549.7,488.0 533.1,477.8" fill="#cfcfcf"/>
<polygon shape-rendering="crispEdges" points="532.7,481.9 545.9,490.2 546.2,487.7 532.9,479.4" fill="#555555"/>
<polygon shape-rendering="crispEdges" points="532.2,486.8 545.4,495.2 545.7,492.6 532.4,484.3" fill="#5a5a5a"/>
<polygon shape-rendering="crispEdges" points="545.3,496.7 548.7,498.8 549.2,493.4 545.8,491.3" fill="#6e6e6e"/>
<polygon shape-rendering="crispEdges" points="533.1,477.8 549.7,488.0 556.5,481.4 540.0,471.3" fill="#d2d2d2"/>
<polyline points="518.4,501.4 536.8,513.5 544.5,505.7" fill="none" stroke="#ffe020" stroke-width="1"/>
<polygon shape-rendering="crispEdges" points="535.8,511.9 542.9,504.7 544.0,493.7 536.9,500.6" fill="#c2c2c2"/>
<polygon shape-rendering="crispEdges" points="519.0,500.8 535.8,511.9 536.9,500.6 520.1,490.0" fill="#cfcfcf"/>
<polygon shape-rendering="crispEdges" points="519.7,494.3 533.0,502.9 533.3,500.3 519.9,491.7" fill="#555555"/>
<polygon shape-rendering="crispEdges" points="519.2,499.3 532.5,508.1 532.8,505.4 519.4,496.7" fill="#5a5a5a"/>
<polygon shape-rendering="crispEdges" points="532.4,509.6 535.8,511.9 536.3,506.3 532.9,504.1" fill="#6e6e6e"/>
<polygon shape-rendering="crispEdges" points="520.1,490.0 536.9,500.6 544.0,493.7 527.2,483.2" fill="#d2d2d2"/>
<polyline points="504.8,514.6 523.3,527.2 531.3,519.1" fill="none" stroke="#ffe020" stroke-width="1"/>
<polygon shape-rendering="crispEdges" points="522.3,525.5 529.7,518.0 530.8,506.6 523.4,513.8" fill="#c2c2c2"/>
<polygon shape-rendering="crispEdges" points="505.4,514.0 522.3,525.5 523.4,513.8 506.5,502.7" fill="#cfcfcf"/>
<polygon shape-rendering="crispEdges" points="506.1,507.2 519.6,516.2 519.8,513.4 506.4,504.5" fill="#555555"/>
<polygon shape-rendering="crispEdges" points="505.6,512.4 519.0,521.5 519.3,518.7 505.8,509.7" fill="#5a5a5a"/>
<polygon shape-rendering="crispEdges" points="518.9,523.2 522.3,525.5 522.9,519.7 519.4,517.4" fill="#6e6e6e"/>
<polygon shape-rendering="crispEdges" points="506.5,502.7 523.4,513.8 530.8,506.6 514.0,495.7" fill="#d2d2d2"/>
<line x1="343.5" y1="530.5" x2="343.5" y2="505" stroke="#7070ff" stroke-width="1.2"/>
<line x1="343.5" y1="530.5" x2="368" y2="512.5" stroke="#70ff70" stroke-width="1"/>
<path d="M362 512.5H368.5L369 515M370 507.5V509.5" stroke="#70ff70" stroke-width="1" fill="none"/>
<line x1="343.5" y1="530.5" x2="371" y2="546.5" stroke="#ff7070" stroke-width="1"/>
</svg>
<div class="t" style="left:525.5px;top:567.7px;letter-spacing:-0.45px">Zoom:</div>
<div class="btn " style="left:565px;top:565px;width:42px"></div>

<div class="t" style="left:580.0px;top:569.7px;transform:scaleX(1.143);transform-origin:0 0">In</div>
<div class="btn " style="left:616px;top:565px;width:42px"></div>

<div class="t" style="left:626.9px;top:569.7px;transform:scaleX(1.094);transform-origin:0 0">Out</div>
</body>
</html>
